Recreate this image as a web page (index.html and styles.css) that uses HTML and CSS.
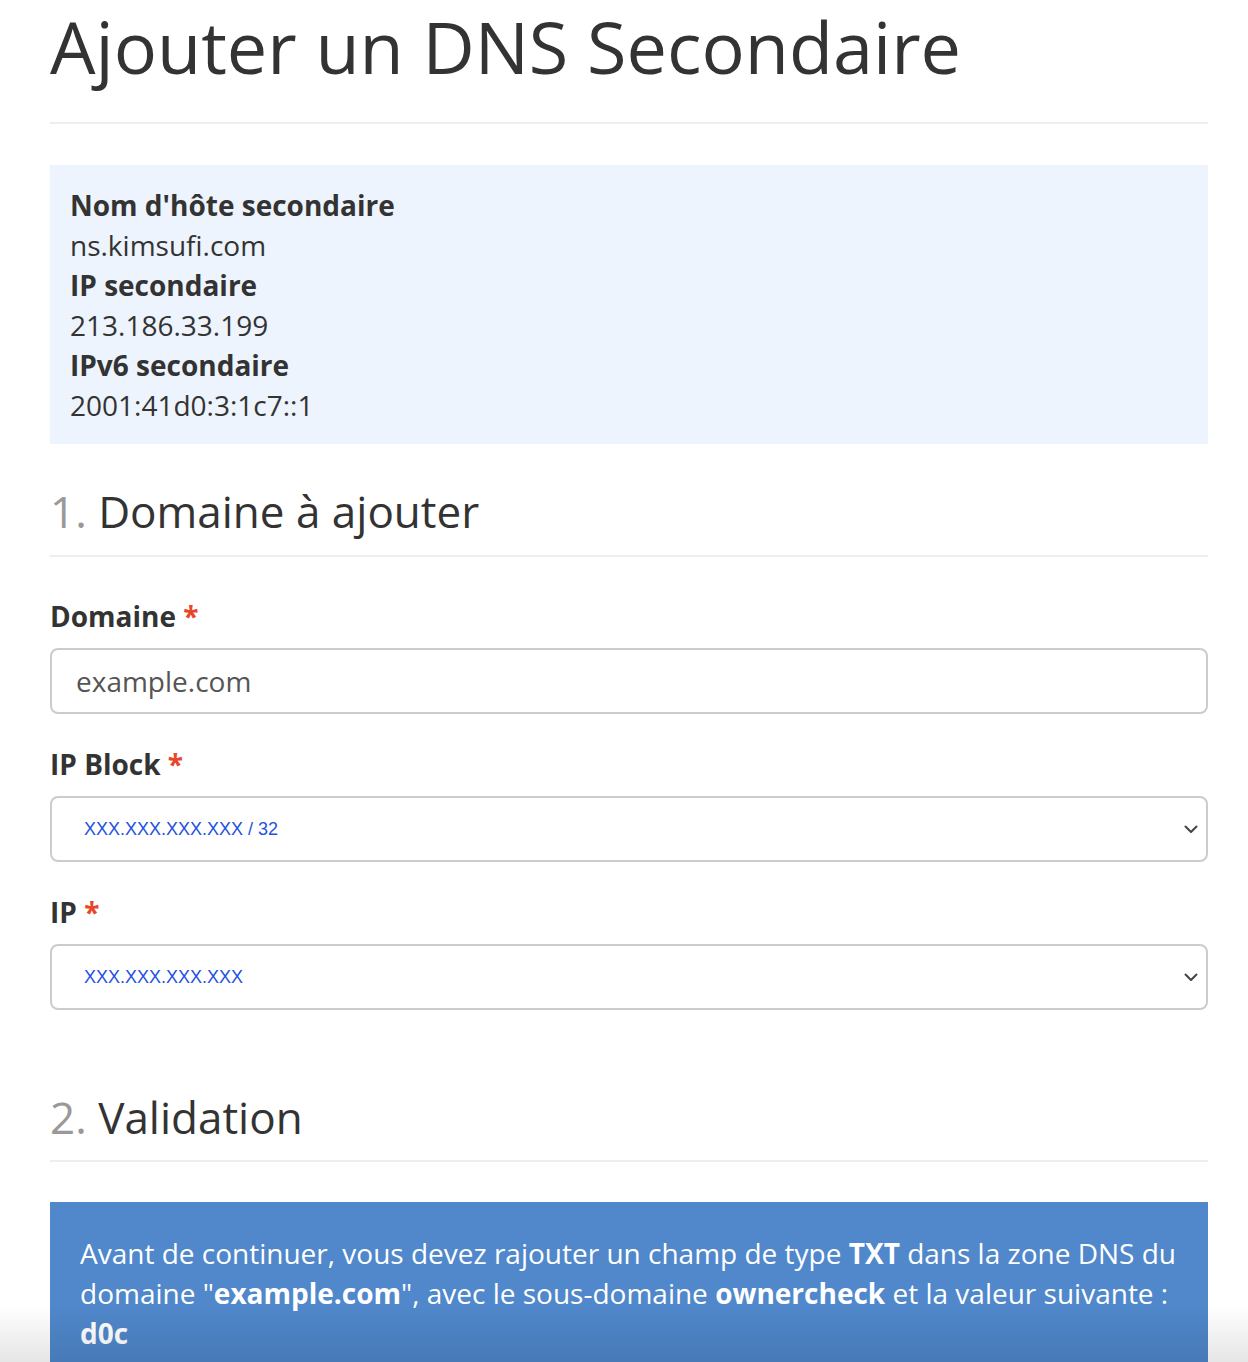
FILE: index.html
```html
<!DOCTYPE html>
<html lang="fr">
<head>
  <meta charset="UTF-8">
  <meta name="viewport" content="width=device-width, initial-scale=1.0">
  <title>Ajouter un DNS Secondaire</title>
  <link rel="stylesheet" href="styles.css">
</head>
<body>

  <div class="container">
    <h1 class="page-header">Ajouter un DNS Secondaire</h1>

    <div class="info-box">
      <strong>Nom d'hôte secondaire</strong><br>
      ns.kimsufi.com<br>
      <strong>IP secondaire</strong><br>
      213.186.33.199<br>
      <strong>IPv6 secondaire</strong><br>
      2001:41d0:3:1c7::1
    </div>

    <h2 class="step"><span class="step-num">1.</span> Domaine à ajouter</h2>

    <form id="secondaryForm">
      <div class="form-group">
        <label for="domain">Domaine <span class="required">*</span></label>
        <input type="text" id="domain" class="form-control" value="example.com">
      </div>

      <div class="form-group">
        <label for="ipBlock">IP Block <span class="required">*</span></label>
        <div class="select-wrap">
          <select id="ipBlock" class="form-select">
            <option>XXX.XXX.XXX.XXX / 32</option>
          </select>
          <svg class="chevron" width="14" height="9" viewBox="0 0 14 9">
            <path d="M1.5 1.5 L7 7 L12.5 1.5" fill="none" stroke="#444" stroke-width="2" stroke-linecap="round" stroke-linejoin="round"/>
          </svg>
        </div>
      </div>

      <div class="form-group">
        <label for="ip">IP <span class="required">*</span></label>
        <div class="select-wrap">
          <select id="ip" class="form-select">
            <option>XXX.XXX.XXX.XXX</option>
          </select>
          <svg class="chevron" width="14" height="9" viewBox="0 0 14 9">
            <path d="M1.5 1.5 L7 7 L12.5 1.5" fill="none" stroke="#444" stroke-width="2" stroke-linecap="round" stroke-linejoin="round"/>
          </svg>
        </div>
      </div>
    </form>

    <h2 class="step step-validation"><span class="step-num">2.</span> Validation</h2>

    <div class="alert">
      Avant de continuer, vous devez rajouter un champ de type <strong>TXT</strong> dans la zone DNS du
      domaine "<strong>example.com</strong>", avec le sous-domaine <strong>ownercheck</strong> et la valeur suivante :<br>
      <strong class="token">d0c</strong>
    </div>
  </div>

  <!-- soft shade along the bottom of the window -->
  <div class="bottom-shade"></div>

</body>
</html>
```

FILE: styles.css
```css
body {
  font-family: 'Open Sans', 'Noto Sans', sans-serif;
  font-size: 28px;
  line-height: 40px;
  color: #333;
  background-color: #fff;
  margin: 0;
}

.container {
  padding: 0 40px 0 50px;
}

.page-header {
  font-size: 72px;
  font-weight: 400;
  line-height: 1.1;
  margin: 7px 0 0;
  padding-bottom: 36px;
  border-bottom: 2px solid #eee;
}

.info-box {
  margin-top: 41px;
  padding: 20px 20px 19px;
  background-color: #eef4fd;
}

.info-box strong {
  font-weight: 700;
}

.step {
  font-size: 44px;
  font-weight: 400;
  line-height: 1.1;
  margin: 43px 0 0;
  padding-bottom: 19px;
  border-bottom: 2px solid #eee;
}

.step-num {
  color: #999;
}

.step-validation {
  margin-top: 83px;
}

#secondaryForm {
  margin-top: 39px;
}

.form-group {
  margin-bottom: 30px;
}

.form-group label {
  display: block;
  font-weight: 700;
  margin-bottom: 12px;
}

.required {
  color: #e8462a;
}

.form-control,
.form-select {
  display: block;
  box-sizing: border-box;
  width: 100%;
  height: 66px;
  border: 2px solid #ccc;
  border-radius: 8px;
  background-color: #fff;
  margin: 0;
}

.form-control {
  padding: 0 24px;
  font-family: 'Open Sans', 'Noto Sans', sans-serif;
  font-size: 28px;
  color: #555;
}

.select-wrap {
  position: relative;
}

.form-select {
  -webkit-appearance: none;
  appearance: none;
  padding: 0 32px;
  font-family: 'Liberation Sans', Arial, sans-serif;
  font-size: 18px;
  color: #1f52e0;
}

.chevron {
  position: absolute;
  right: 10px;
  top: 29px;
}

.alert {
  margin-top: 40px;
  padding: 31px 30px 30px;
  background-color: #5088cb;
  color: #fff;
}

.alert strong {
  font-weight: 700;
}

.bottom-shade {
  position: fixed;
  left: 0;
  right: 0;
  bottom: 0;
  height: 56px;
  background: linear-gradient(to bottom, rgba(0, 0, 0, 0), rgba(0, 0, 0, 0.1));
  pointer-events: none;
}
```
